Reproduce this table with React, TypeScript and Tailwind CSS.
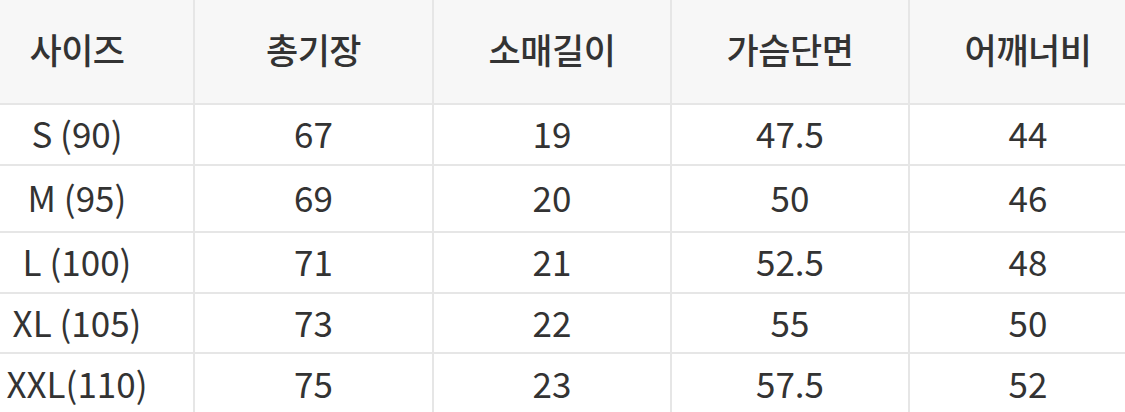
const headers = ["사이즈", "총기장", "소매길이", "가슴단면", "어깨너비"];

const rows = [
	{ h: "h-[61px]", cells: ["S (90)", "67", "19", "47.5", "44"] },
	{ h: "h-[67px]", cells: ["M (95)", "69", "20", "50", "46"] },
	{ h: "h-[61px]", cells: ["L (100)", "71", "21", "52.5", "48"] },
	{ h: "h-[60px]", cells: ["XL (105)", "73", "22", "55", "50"] },
	{ h: "h-[62px]", cells: ["XXL(110)", "75", "23", "57.5", "52"] },
];

export default function App() {
	return (
		<div
			className="w-[1125px] h-[412px] overflow-hidden bg-white text-[#333333]"
			style={{ fontFamily: '"Noto Sans CJK KR", "Noto Sans", sans-serif' }}
		>
			<table className="ml-[-41px] w-[1187px] table-fixed border-collapse text-[35px] leading-none">
				<colgroup>
					<col className="w-[234px]" />
					<col className="w-[239px]" />
					<col className="w-[238px]" />
					<col className="w-[238px]" />
					<col className="w-[238px]" />
				</colgroup>
				<thead>
					<tr className="h-[104px] bg-[#f7f7f7]">
						{headers.map((t) => (
							<th
								key={t}
								className="border-2 border-[#e6e6e6] border-t-0 text-center align-middle font-medium tracking-[-0.5px] pb-[6px]"
							>
								{t}
							</th>
						))}
					</tr>
				</thead>
				<tbody>
					{rows.map((r) => (
						<tr key={r.cells[0]} className={r.h}>
							{r.cells.map((c, i) => (
								<td
									key={i}
									className="border-2 border-[#e6e6e6] text-center align-middle pb-[4px]"
								>
									{c}
								</td>
							))}
						</tr>
					))}
				</tbody>
			</table>
		</div>
	);
}
